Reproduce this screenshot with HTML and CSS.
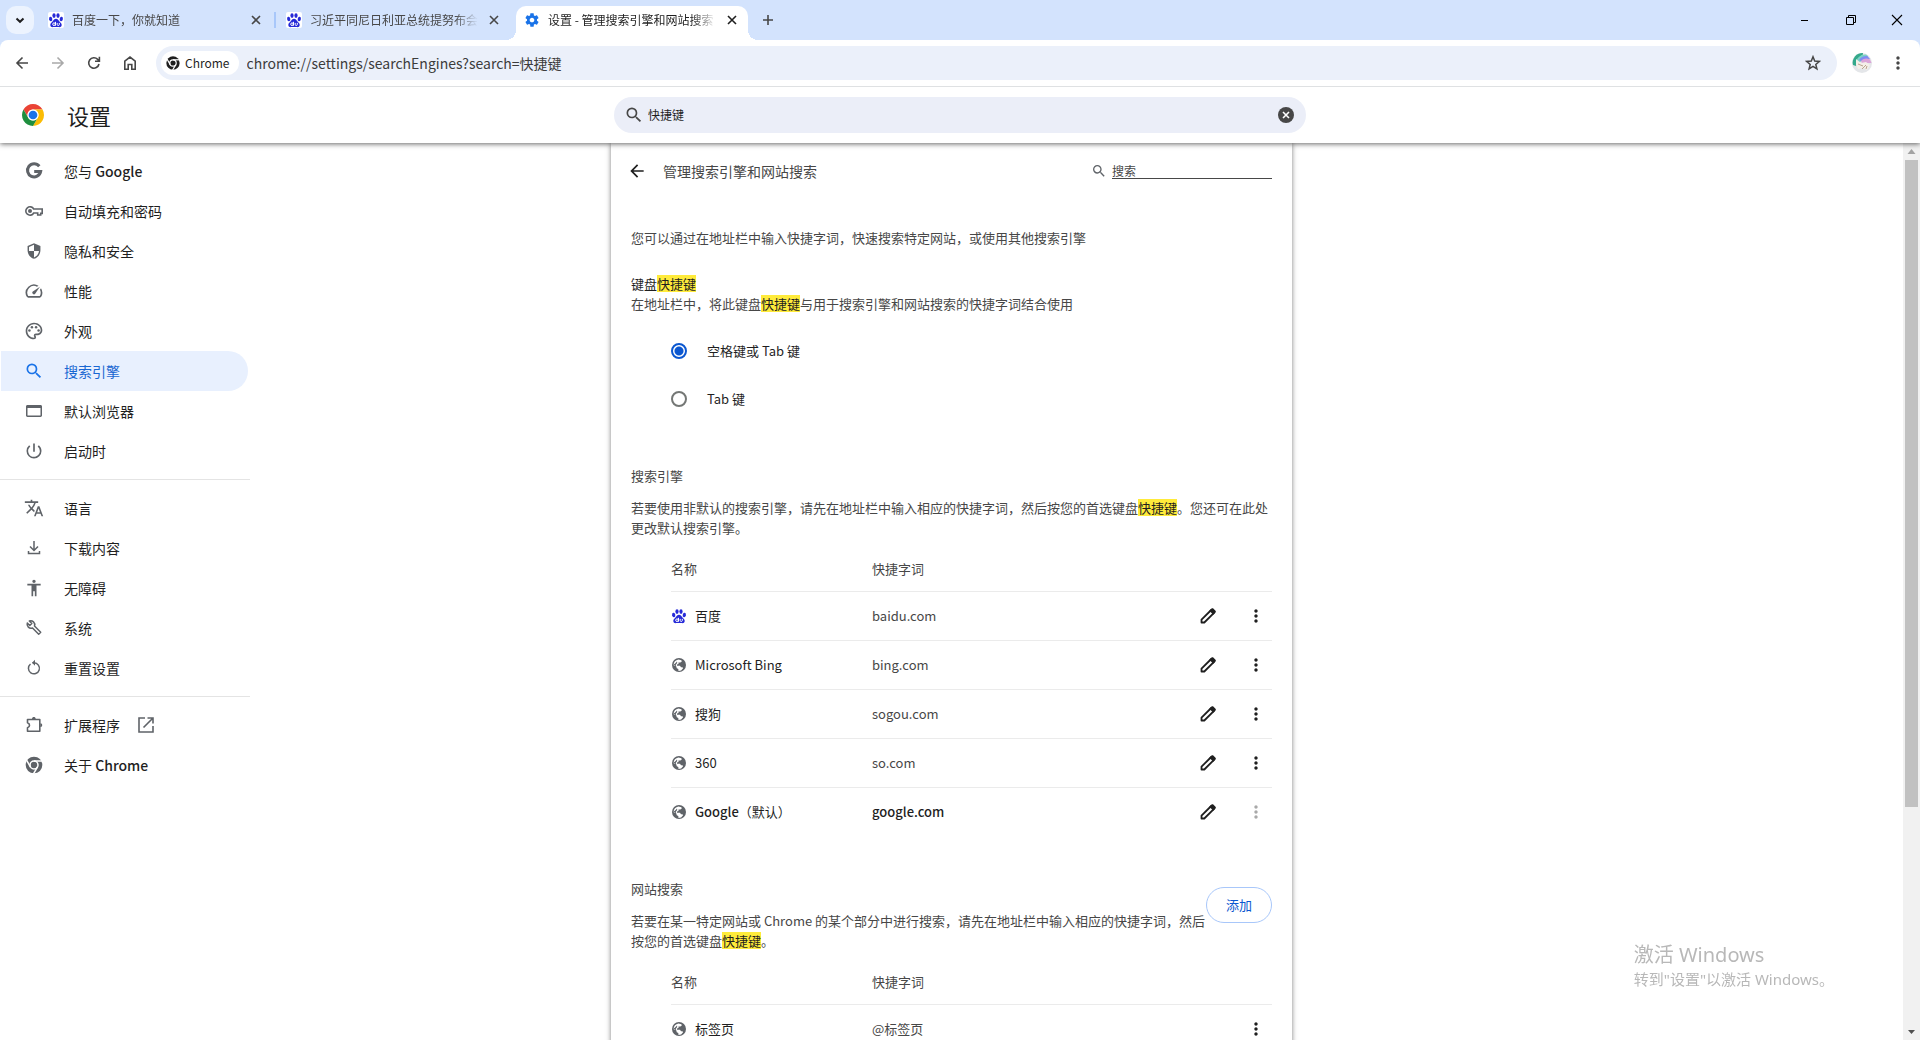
FILE: index.html
```html
<!DOCTYPE html>
<html lang="zh-CN">
<head>
<meta charset="utf-8">
<title>设置 - 管理搜索引擎和网站搜索</title>
<link rel="stylesheet" href="styles.css">
</head>
<body>
<svg class="sprite" aria-hidden="true">
  <symbol id="baidu" viewBox="0 0 16 16">
    <g fill="#2529d8"><ellipse cx="2.7" cy="7" rx="1.6" ry="2.2" transform="rotate(-12 2.7 7)"/><ellipse cx="6" cy="3.6" rx="1.6" ry="2.4"/><ellipse cx="10" cy="3.6" rx="1.6" ry="2.4"/><ellipse cx="13.3" cy="7" rx="1.6" ry="2.2" transform="rotate(12 13.3 7)"/><path d="M8 6.8c1.6 0 2.3 1.3 3.2 2.4 1 1.100 2.600 2 2.500 3.800-.1 1.700-1.400 2.300-2.900 2.100-1.900-.2-3.700-.2-5.600 0-1.500.2-2.800-.4-2.900-2.100-.1-1.800 1.500-2.700 2.500-3.800.9-1.100 1.600-2.400 3.200-2.400z"/></g>
    <g fill="none" stroke="#fff" stroke-width="1"><circle cx="6" cy="12.200" r="1.300"/><path d="M7.500 9.800v3.900M9.200 10.900v1.700c0 1.200 2.100 1.200 2.100 0v-1.700"/></g>
  </symbol>
  <symbol id="globe" viewBox="0 0 16 16"><circle cx="8" cy="8" r="7" fill="#5f6368"/><path d="M2.600 8.200c0-2.900 2-5.200 4.800-5.600l3 .6.4 1.200-1.500 1-1.800.2v1.500l-1.500.5v1.100h3l1 1.500h1.500l.6 1-2 2.200-2.600.5-.2-1.900-1.500-.8-.6-1.900z" fill="#fff"/><path d="M2.600 7.800 4.600 5.900 6 4.600 6.200 6 4.800 7.700 5.200 9.200z" fill="#5f6368"/></symbol>
  <symbol id="search" viewBox="0 0 24 24"><path d="M15.500 14h-.79l-.28-.27A6.470 6.470 0 0 0 16 9.500 6.500 6.500 0 1 0 9.500 16c1.610 0 3.090-.59 4.230-1.570l.27.28v.79l5 4.990L20.490 19l-4.990-5zm-6 0C7.010 14 5 11.990 5 9.500S7.010 5 9.500 5 14 7.010 14 9.500 11.990 14 9.500 14z"/></symbol>
  <symbol id="gear" viewBox="0 0 24 24"><path d="M19.430 12.980c.04-.32.07-.64.07-.98s-.03-.66-.07-.98l2.110-1.650c.19-.15.24-.42.12-.64l-2-3.460c-.12-.22-.39-.3-.61-.22l-2.490 1c-.52-.4-1.080-.73-1.690-.98l-.38-2.650C14.460 2.180 14.250 2 14 2h-4c-.25 0-.46.18-.49.42l-.38 2.650c-.61.25-1.170.59-1.690.98l-2.490-1c-.23-.09-.49 0-.61.22l-2 3.460c-.13.22-.07.49.12.64l2.110 1.650c-.04.32-.07.65-.07.98s.03.66.07.98l-2.110 1.650c-.19.15-.24.42-.12.64l2 3.460c.12.22.39.3.61.22l2.490-1c.52.4 1.080.73 1.690.98l.38 2.650c.03.24.24.42.49.42h4c.25 0 .46-.18.49-.42l.38-2.650c.61-.25 1.170-.59 1.690-.98l2.490 1c.23.09.49 0 .61-.22l2-3.460c.12-.22.07-.49-.12-.64l-2.110-1.650zM12 15.500c-1.930 0-3.500-1.570-3.500-3.500s1.570-3.500 3.500-3.500 3.500 1.570 3.500 3.500-1.570 3.500-3.500 3.500z"/></symbol>
  <symbol id="x" viewBox="0 0 16 16"><path d="m4 4 8 8m0-8-8 8" fill="none" stroke="currentColor" stroke-width="1.600"/></symbol>
  <symbol id="back" viewBox="0 0 24 24"><path d="M20 11H7.830l5.590-5.590L12 4l-8 8 8 8 1.410-1.410L7.830 13H20v-2z"/></symbol>
  <symbol id="more" viewBox="0 0 24 24"><path d="M12 8c1.100 0 2-.9 2-2s-.9-2-2-2-2 .9-2 2 .9 2 2 2zm0 2c-1.100 0-2 .9-2 2s.9 2 2 2 2-.9 2-2-.9-2-2-2zm0 6c-1.100 0-2 .9-2 2s.9 2 2 2 2-.9 2-2-.9-2-2-2z"/></symbol>
  <symbol id="pencil" viewBox="0 0 20 20"><path d="M3.500 16.500v-2.800L13.200 4l2.800 2.800-9.700 9.700z" fill="none" stroke="currentColor" stroke-width="1.800" stroke-linejoin="round"/><path d="m11.300 4.700 2.200-2.200c.5-.5 1.300-.5 1.800 0l2.200 2.200c.5.5.5 1.300 0 1.800l-2.200 2.200z"/></symbol>
  <symbol id="chrome" viewBox="0 0 24 24"><circle cx="12" cy="12" r="10"/><g fill="none" stroke="#fff" stroke-width="1.800"><circle cx="12" cy="12" r="4.800"/><path d="M12 7.200h11"/><path d="M12 7.200h11" transform="rotate(120 12 12)"/><path d="M12 7.200h11" transform="rotate(240 12 12)"/></g></symbol>
  <symbol id="chrome-color" viewBox="0 0 48 48"><path fill="#ea4335" d="M24 12h20.780A24 24 0 0 0 3.220 12l10.390 18A12 12 0 0 1 24 12z"/><path fill="#fbbc04" d="M24 12h20.780A24 24 0 0 0 3.220 12l10.390 18A12 12 0 0 1 24 12z" transform="rotate(120 24 24)"/><path fill="#1e8e3e" d="M24 12h20.780A24 24 0 0 0 3.220 12l10.390 18A12 12 0 0 1 24 12z" transform="rotate(240 24 24)"/><circle cx="24" cy="24" r="12" fill="#fff"/><circle cx="24" cy="24" r="9.500" fill="#1a73e8"/></symbol>
</svg>

<header class="tabstrip">
  <button class="tab-search" aria-label="搜索标签页"><svg class="i16" viewBox="0 0 16 16"><path d="m4.500 6.500 3.500 3.300 3.500-3.300" fill="none" stroke="#1f1f1f" stroke-width="2"/></svg></button>
  <div class="tab"><svg class="i16 favicon"><use href="#baidu"/></svg><span class="tab-title">百度一下，你就知道</span><button class="plain" aria-label="关闭"><svg class="i16"><use href="#x"/></svg></button></div>
  <div class="tab divided"><svg class="i16 favicon"><use href="#baidu"/></svg><span class="tab-title">习近平同尼日利亚总统提努布会谈</span><button class="plain" aria-label="关闭"><svg class="i16"><use href="#x"/></svg></button></div>
  <div class="tab active"><svg class="i16 gear"><use href="#gear"/></svg><span class="tab-title">设置 - 管理搜索引擎和网站搜索</span><button class="plain" aria-label="关闭"><svg class="i16"><use href="#x"/></svg></button></div>
  <button class="plain new-tab" aria-label="新标签页"><svg class="i16" viewBox="0 0 16 16"><path d="M8 3v10M3 8h10" stroke="currentColor" stroke-width="1.600"/></svg></button>
  <div class="window-controls">
    <button class="plain" aria-label="最小化"><svg class="i16" viewBox="0 0 16 16"><path d="M4 8.500h7" stroke="#000"/></svg></button>
    <button class="plain" aria-label="还原"><svg class="i16" viewBox="0 0 16 16"><path d="M3.500 5.500h7v7h-7zM5.500 5v-1.500h7v7H11" fill="none" stroke="#000"/></svg></button>
    <button class="plain" aria-label="关闭窗口"><svg class="i16" viewBox="0 0 16 16"><path d="m3 3 10 10m0-10L3 13" stroke="#000" stroke-width="1.100"/></svg></button>
  </div>
</header>

<nav class="toolbar" aria-label="浏览器工具栏">
  <button class="plain nav-btn" aria-label="后退"><svg class="i16" viewBox="0 0 16 16"><path d="M14 8H3m5.500-5.500L3 8l5.500 5.500" fill="none" stroke="#474747" stroke-width="1.600"/></svg></button>
  <button class="plain nav-btn" aria-label="前进" disabled><svg class="i16" viewBox="0 0 16 16"><path d="M2 8h11M7.500 2.500 13 8l-5.500 5.500" fill="none" stroke="#a9a9a9" stroke-width="1.600"/></svg></button>
  <button class="plain nav-btn" aria-label="重新加载"><svg class="i16" viewBox="0 0 16 16"><path d="M13 9a5.200 5.200 0 1 1-1.300-4.600L13.400 6M13.400 1.800V6.200H9" fill="none" stroke="#474747" stroke-width="1.600"/></svg></button>
  <button class="plain nav-btn" aria-label="主页"><svg class="i16" viewBox="0 0 16 16"><path d="M2.800 6.200 8 2.100l5.200 4.100v8.100H9.800V9.500H6.200v4.800H2.800z" fill="none" stroke="#474747" stroke-width="1.600"/></svg></button>
  <div class="omnibox">
    <span class="chip"><svg class="i16"><use href="#chrome"/></svg>Chrome</span>
    <input class="url" type="text" aria-label="地址和搜索栏" value="chrome://settings/searchEngines?search=快捷键">
    <button class="plain" aria-label="为此标签页添加书签"><svg class="i16" viewBox="0 0 16 16"><path d="m8 1.800 1.700 4.300 4.600.3-3.500 3 1.100 4.500L8 11.400l-3.900 2.500 1.100-4.500-3.500-3 4.600-.3z" fill="none" stroke="#474747" stroke-width="1.500"/></svg></button>
  </div>
  <button class="plain avatar" aria-label="个人资料"><svg viewBox="0 0 20 20"><circle cx="10" cy="10" r="10" fill="#e4e6e9"/><path d="M1 12A9.500 9.500 0 0 1 11 .1L10 6l-6 7z" fill="#34a98b"/><path d="M4 11A9 9 0 0 1 14 1.500l2 1.500-8 6z" fill="#7bd3c4"/><path d="M7 7c2-3 5-4.500 8.500-4L18 6l-9 2z" fill="#7f8df2"/><path d="M9 8c3-3 6-3 9-1.500L19.500 10 10 10z" fill="#dba4d8"/><path d="m4 6 5 4 5-1 4 3-3 5-4-2-5 1-2-4z" fill="#f4efe8"/><path d="m6 11 5 2m-1 3 4-4m1 1-1 3" stroke="#b9a38e" fill="none"/></svg></button>
  <button class="plain" aria-label="菜单"><svg class="i20 muted"><use href="#more"/></svg></button>
</nav>

<header class="settings-header">
  <div class="brand"><svg class="logo"><use href="#chrome-color"/></svg><h1>设置</h1></div>
  <div class="settings-search">
    <svg class="i20"><use href="#search"/></svg>
    <input type="text" aria-label="在设置中搜索" value="快捷键">
    <button class="plain" aria-label="清除搜索"><svg class="i16" viewBox="0 0 16 16"><circle cx="8" cy="8" r="8" fill="#474747"/><path d="m5 5 6 6m0-6-6 6" stroke="#fff" stroke-width="1.600"/></svg></button>
  </div>
</header>

<div class="workspace">
  <nav class="sidebar" aria-label="设置">
    <ul>
      <li><a href="#people"><svg viewBox="0 0 20 20"><path d="M15.300 5.200A6.600 6.600 0 1 0 16.600 10.600h-6.400" fill="none" stroke="currentColor" stroke-width="3"/></svg><span>您与 <b>Google</b></span></a></li>
      <li><a href="#autofill"><svg viewBox="0 0 20 20"><g fill="none" stroke="currentColor" stroke-width="1.600"><path d="M9.700 8h8.500v4.400h-1.500V14h-3v-2H9.700A4.200 4.200 0 1 1 9.700 8z"/></g><circle cx="6" cy="10" r="2"/></svg><span>自动填充和密码</span></a></li>
      <li><a href="#privacy"><svg viewBox="0 0 28 28"><path transform="translate(2 2)" d="M12 1 3 5v6c0 5.550 3.840 10.740 9 12 5.160-1.260 9-6.450 9-12V5l-9-4zm0 10.990h7c-.53 4.120-3.280 7.790-7 8.940V12H5V6.300l7-3.110v8.800z"/></svg><span>隐私和安全</span></a></li>
      <li><a href="#performance"><svg viewBox="0 0 24 24"><path d="m20.380 8.570-1.230 1.850a8 8 0 0 1-.22 7.580H5.070A8 8 0 0 1 15.580 6.850l1.850-1.230A10 10 0 0 0 3.350 19a2 2 0 0 0 1.720 1h13.850a2 2 0 0 0 1.740-1 10 10 0 0 0-.27-10.440zm-9.790 6.840a2 2 0 0 0 2.830 0l5.660-8.490-8.490 5.660a2 2 0 0 0 0 2.830z"/></svg><span>性能</span></a></li>
      <li><a href="#appearance"><svg viewBox="0 0 24 24"><path d="M12 22C6.490 22 2 17.510 2 12S6.490 2 12 2s10 4.040 10 9c0 3.310-2.690 6-6 6h-1.770c-.28 0-.5.22-.5.5 0 .12.050.23.130.33.410.470.640 1.060.640 1.670A2.500 2.500 0 0 1 12 22zm0-18c-4.410 0-8 3.590-8 8s3.590 8 8 8c.28 0 .5-.22.5-.5a.54.54 0 0 0-.14-.35c-.41-.46-.63-1.050-.63-1.650a2.500 2.500 0 0 1 2.500-2.500H16c2.210 0 4-1.790 4-4 0-3.860-3.590-7-8-7z"/><circle cx="6.500" cy="11.500" r="1.500"/><circle cx="9.500" cy="7.500" r="1.500"/><circle cx="14.500" cy="7.500" r="1.500"/><circle cx="17.500" cy="11.500" r="1.500"/></svg><span>外观</span></a></li>
      <li><a class="current" href="#search-engines"><svg><use href="#search"/></svg><span>搜索引擎</span></a></li>
      <li><a href="#default-browser"><svg viewBox="0 0 20 20"><path d="M3.500 4h13c.8 0 1.500.6 1.500 1.400v9.200c0 .8-.7 1.400-1.500 1.400h-13c-.8 0-1.500-.6-1.500-1.400V5.400C2 4.600 2.700 4 3.500 4zm0 3v7.500h13V7z"/></svg><span>默认浏览器</span></a></li>
      <li><a href="#startup"><svg viewBox="0 0 24 24"><path d="M13 3h-2v10h2V3zm4.830 2.170-1.420 1.420A6.920 6.920 0 0 1 19 12c0 3.870-3.130 7-7 7A6.995 6.995 0 0 1 7.580 6.580L6.170 5.170A8.932 8.932 0 0 0 3 12a9 9 0 0 0 18 0c0-2.740-1.230-5.180-3.170-6.830z"/></svg><span>启动时</span></a></li>
    </ul>
    <ul>
      <li><a href="#languages"><svg viewBox="0 0 24 24"><path d="m12.870 15.070-2.540-2.510.03-.03A17.520 17.520 0 0 0 14.070 6H17V4h-7V2H8v2H1v1.990h11.170C11.500 7.920 10.440 9.750 9 11.350 8.070 10.320 7.300 9.190 6.690 8h-2c.73 1.630 1.730 3.170 2.980 4.560l-5.090 5.020L4 19l5-5 3.110 3.110.76-2.040zM18.500 10h-2L12 22h2l1.120-3h4.750L21 22h2l-4.500-12zm-2.620 7 1.620-4.330L19.120 17h-3.240z"/></svg><span>语言</span></a></li>
      <li><a href="#downloads"><svg viewBox="0 0 20 20"><path d="M10 3v9m-4-3.500 4 4 4-4M4.500 13v2.500h11v-2.500" fill="none" stroke="currentColor" stroke-width="1.500"/></svg><span>下载内容</span></a></li>
      <li><a href="#a11y"><svg viewBox="0 0 24 24"><path d="M12 2c1.100 0 2 .9 2 2s-.9 2-2 2-2-.9-2-2 .9-2 2-2zm8 7h-5v13h-2v-6h-2v6H9V9H4V7h16v2z"/></svg><span>无障碍</span></a></li>
      <li><a href="#system"><svg viewBox="0 0 20 20"><path d="m10.500 8 6.200 6.200-2 2-6.200-6.200a4 4 0 0 1-5.200-5l2.500 2.500 2-2L5.300 3a4 4 0 0 1 5.200 5z" fill="none" stroke="currentColor" stroke-width="1.500" stroke-linejoin="round"/></svg><span>系统</span></a></li>
      <li><a href="#reset"><svg viewBox="0 0 20 20"><path d="M6.500 6A5.500 5.500 0 1 0 10 4.800H8.500" fill="none" stroke="currentColor" stroke-width="1.500"/><path d="M11 1.800v6L8 4.800z"/></svg><span>重置设置</span></a></li>
    </ul>
    <ul>
      <li><a href="#extensions"><svg viewBox="0 0 20 20"><path d="M3.500 4.500h12.300v11.800H3.500v-3.600c2.700-.8 2.700-4.200 0-5z" fill="none" stroke="currentColor" stroke-width="1.600" stroke-linejoin="round"/><path d="M8 4c0-2.600 3.700-2.600 3.700 0zM16.300 8.300c2.600 0 2.600 3.800 0 3.800z"/></svg><span>扩展程序</span><svg class="external" viewBox="0 0 20 20"><path d="M9 3H3v14h14v-6M11.500 3H17v5.500M17 3 7.500 12.500" fill="none" stroke="currentColor" stroke-width="1.600"/></svg></a></li>
      <li><a href="#about"><svg><use href="#chrome"/></svg><span>关于 <b>Chrome</b></span></a></li>
    </ul>
  </nav>

  <main class="card">
    <div class="subheader">
      <button class="plain" aria-label="返回"><svg class="i20"><use href="#back"/></svg></button>
      <h2>管理搜索引擎和网站搜索</h2>
      <label class="find"><svg class="i16"><use href="#search"/></svg><input type="search" placeholder="搜索" aria-label="搜索"></label>
    </div>
    <p class="intro">您可以通过在地址栏中输入快捷字词，快速搜索特定网站，或使用其他搜索引擎</p>
    <section class="shortcut">
      <h3 class="strong">键盘<mark>快捷键</mark></h3>
      <p>在地址栏中，将此键盘<mark>快捷键</mark>与用于搜索引擎和网站搜索的快捷字词结合使用</p>
      <div class="radios">
        <label><input type="radio" name="shortcut" checked>空格键或 Tab 键</label>
        <label><input type="radio" name="shortcut">Tab 键</label>
      </div>
    </section>
    <section class="engines">
      <div class="section-head"><div>
        <h3>搜索引擎</h3>
        <p>若要使用非默认的搜索引擎，请先在地址栏中输入相应的快捷字词，然后按您的首选键盘<mark>快捷键</mark>。您还可在此处更改默认搜索引擎。</p>
      </div></div>
      <table>
        <thead><tr><th class="name">名称</th><th>快捷字词</th><th class="actions"></th></tr></thead>
        <tbody>
          <tr><td><span class="engine"><svg class="i16"><use href="#baidu"/></svg>百度</span></td><td>baidu.com</td><td><span class="tools"><button class="plain" aria-label="修改"><svg class="i20"><use href="#pencil"/></svg></button><button class="plain" aria-label="更多操作"><svg class="i20"><use href="#more"/></svg></button></span></td></tr>
          <tr><td><span class="engine"><svg class="i16"><use href="#globe"/></svg>Microsoft Bing</span></td><td>bing.com</td><td><span class="tools"><button class="plain" aria-label="修改"><svg class="i20"><use href="#pencil"/></svg></button><button class="plain" aria-label="更多操作"><svg class="i20"><use href="#more"/></svg></button></span></td></tr>
          <tr><td><span class="engine"><svg class="i16"><use href="#globe"/></svg>搜狗</span></td><td>sogou.com</td><td><span class="tools"><button class="plain" aria-label="修改"><svg class="i20"><use href="#pencil"/></svg></button><button class="plain" aria-label="更多操作"><svg class="i20"><use href="#more"/></svg></button></span></td></tr>
          <tr><td><span class="engine"><svg class="i16"><use href="#globe"/></svg>360</span></td><td>so.com</td><td><span class="tools"><button class="plain" aria-label="修改"><svg class="i20"><use href="#pencil"/></svg></button><button class="plain" aria-label="更多操作"><svg class="i20"><use href="#more"/></svg></button></span></td></tr>
          <tr><td><span class="engine"><svg class="i16"><use href="#globe"/></svg><span><b>Google</b>（默认）</span></span></td><td><b>google.com</b></td><td><span class="tools"><button class="plain" aria-label="修改"><svg class="i20"><use href="#pencil"/></svg></button><button class="plain" aria-label="更多操作" disabled><svg class="i20"><use href="#more"/></svg></button></span></td></tr>
        </tbody>
      </table>
    </section>
    <section class="sites">
      <div class="section-head"><div>
        <h3>网站搜索</h3>
        <p>若要在某一特定网站或 Chrome 的某个部分中进行搜索，请先在地址栏中输入相应的快捷字词，然后按您的首选键盘<mark>快捷键</mark>。</p>
      </div><button class="add">添加</button></div>
      <table>
        <thead><tr><th class="name">名称</th><th>快捷字词</th><th class="actions"></th></tr></thead>
        <tbody>
          <tr><td><span class="engine"><svg class="i16"><use href="#globe"/></svg>标签页</span></td><td>@标签页</td><td><span class="tools"><button class="plain" aria-label="更多操作"><svg class="i20"><use href="#more"/></svg></button></span></td></tr>
        </tbody>
      </table>
    </section>
  </main>

  <div class="scrollbar" aria-hidden="true">
    <svg viewBox="0 0 17 17"><path d="M4.500 11h8l-4-5z" fill="#a3a3a3"/></svg>
    <div class="track"><div class="thumb"></div></div>
    <svg viewBox="0 0 17 17"><path d="M5 7h7l-3.500 4z" fill="#505050"/></svg>
  </div>
</div>

<aside class="watermark"><p class="watermark-title">激活 Windows</p><p>转到"设置"以激活 Windows。</p></aside>
</body>
</html>
```
FILE: styles.css
```css
* { box-sizing: border-box; }

body {
  margin: 0;
  height: 100vh;
  overflow: hidden;
  display: flex;
  flex-direction: column;
  background: #fff;
  color: #1f1f1f;
  font: 13px/20px "Noto Sans CJK SC", sans-serif;
}

h1, h2, h3, p, ul { margin: 0; padding: 0; font-size: inherit; font-weight: 400; }
ul { list-style: none; }
b { font-weight: 500; }
svg { display: block; flex: none; fill: currentColor; }
input, button { font: inherit; color: inherit; }
input { min-width: 0; padding: 0; border: 0; outline: 0; background: none; }

.sprite { position: absolute; width: 0; height: 0; }
.i16 { width: 16px; height: 16px; }
.i20 { width: 20px; height: 20px; }
.muted { color: #474747; }

.plain {
  display: flex;
  align-items: center;
  justify-content: center;
  padding: 0;
  border: 0;
  background: none;
}

/* Tab strip */
.tabstrip {
  display: flex;
  align-items: center;
  height: 40px;
  flex: none;
  padding-left: 6px;
  background: #d3e3fd;
  color: #474747;
  font-size: 12px;
}
.tab-search {
  display: grid;
  place-items: center;
  width: 28px;
  height: 28px;
  margin-right: 6px;
  padding: 0;
  border: 0;
  border-radius: 10px;
  background: #ecf3fe;
}
.tab {
  position: relative;
  display: flex;
  align-items: center;
  gap: 8px;
  width: 238px;
  height: 28px;
  padding: 0 14px 0 8px;
}
.tab.divided::before {
  content: "";
  position: absolute;
  left: -4px;
  top: 6px;
  width: 2px;
  height: 16px;
  background: #a8c7fa;
}
.tab-title {
  flex: 1;
  overflow: hidden;
  white-space: nowrap;
  -webkit-mask-image: linear-gradient(to right, #000 86%, transparent);
  mask-image: linear-gradient(to right, #000 86%, transparent);
}
.tab.active {
  align-self: flex-end;
  width: 232px;
  height: 34px;
  padding: 0 8px 6px;
  border-radius: 10px 10px 0 0;
  background: #fff;
  color: #1f1f1f;
}
.tab.active::before, .tab.active::after {
  content: "";
  position: absolute;
  bottom: 0;
  width: 10px;
  height: 10px;
}
.tab.active::before { left: -10px; background: radial-gradient(circle at 0 0, transparent 10px, #fff 10px); }
.tab.active::after { right: -10px; background: radial-gradient(circle at 100% 0, transparent 10px, #fff 10px); }
.favicon { border-radius: 2px; background: #fff; }
.gear { color: #1a73e8; }
.new-tab { width: 28px; height: 28px; margin-left: 6px; }
.window-controls { display: flex; margin-left: auto; }
.window-controls .plain { width: 46px; height: 40px; }

/* Toolbar */
.toolbar {
  display: flex;
  align-items: center;
  height: 47px;
  flex: none;
  padding: 0 12px 0 4px;
  border-bottom: 1px solid #dfe1e3;
  border-radius: 8px 8px 0 0;
  background: #fff;
}
.tabstrip { margin-bottom: -8px; height: 48px; padding-bottom: 8px; }
.toolbar { position: relative; }
.nav-btn { width: 36px; height: 36px; }
.omnibox {
  display: flex;
  align-items: center;
  flex: 1;
  height: 34px;
  margin: 0 15px 0 8px;
  padding: 0 16px 0 5px;
  border-radius: 17px;
  background: #ebf0fa;
}
.chip {
  display: flex;
  align-items: center;
  gap: 4px;
  height: 24px;
  padding: 0 9px 0 4px;
  border-radius: 12px;
  background: #fff;
  font-size: 12px;
}
.url { flex: 1; margin-left: 8px; font-size: 14px; color: #3c3c3c; }
.avatar { width: 20px; height: 20px; margin-right: 16px; }
.avatar svg { width: 20px; height: 20px; }

/* Settings header */
.settings-header {
  position: relative;
  z-index: 1;
  display: grid;
  grid-template-columns: 1fr minmax(0, 692px) 1fr;
  align-items: center;
  height: 56px;
  flex: none;
  background: #fff;
  box-shadow: 0 1px 5px rgba(0, 0, 0, .6);
  clip-path: inset(0 0 -8px 0);
}
.brand { display: flex; align-items: center; gap: 23px; padding-left: 22px; }
.logo { width: 22px; height: 22px; }
.brand h1 { font-size: 22px; line-height: 32px; }
.settings-search {
  display: flex;
  align-items: center;
  gap: 4px;
  height: 36px;
  padding: 0 12px 0 10px;
  border-radius: 18px;
  background: #ebeef8;
}
.settings-search > svg { color: #474747; }
.settings-search input { flex: 1; font-size: 12px; }

/* Main area */
.workspace {
  display: grid;
  grid-template-columns: 1fr minmax(0, 681px) 1fr 17px;
  grid-template-rows: minmax(0, 1fr);
  flex: 1;
  min-height: 0;
  overflow: hidden;
}
.sidebar { width: 250px; padding-top: 8px; font-size: 14px; }
.sidebar ul + ul { margin-top: 8px; padding-top: 8px; border-top: 1px solid #e4e4e4; }
.sidebar a {
  display: flex;
  align-items: center;
  gap: 20px;
  height: 40px;
  margin: 0 2px 0 1px;
  padding-left: 23px;
  border-radius: 0 20px 20px 0;
  color: #1f1f1f;
  text-decoration: none;
}
.sidebar svg { width: 20px; height: 20px; color: #5f6368; }
.sidebar svg.external { margin-left: -4px; }
.sidebar a.current { background: #e8f0fe; color: #1967d2; }
.sidebar a.current svg { color: #1a73e8; }

.card {
  height: max-content;
  padding: 0 20px 40px;
  background: #fff;
  color: #474747;
  box-shadow: 0 0 5px rgba(0, 0, 0, .5);
}
.subheader { display: flex; align-items: center; height: 56px; }
.subheader > .plain { width: 12px; margin-right: 20px; }
.subheader > .plain svg { color: #1f1f1f; }
.subheader h2 { flex: 1; font-size: 14px; }
.find { display: flex; align-items: center; gap: 5px; color: #5f6368; }
.find input { width: 160px; height: 16px; border-bottom: 1px solid #474747; font-size: 12px; line-height: 15px; }
.find input::placeholder { color: #474747; opacity: 1; }

.intro { padding-top: 29px; }
.shortcut { padding-top: 26px; }
.strong { color: #1f1f1f; }
mark { display: inline-block; line-height: 17px; background: #ffeb3b; color: #1f1f1f; }
.radios { padding: 13px 40px 0; color: #1f1f1f; }
.radios label { display: flex; align-items: center; gap: 20px; height: 48px; }
.radios input {
  appearance: none;
  width: 16px;
  height: 16px;
  margin: 0;
  border: 2px solid #747775;
  border-radius: 50%;
}
.radios input:checked { border-color: #0b57d0; background: radial-gradient(circle, #0b57d0 4px, transparent 5px); }

.engines, .sites { padding-top: 43px; }
.section-head { display: flex; align-items: center; }
.section-head > div { flex: 1; }
.section-head p { margin: 12px -4px 0 0; }
.add {
  width: 66px;
  height: 36px;
  margin-bottom: 20px;
  padding: 0;
  border: 1px solid #a8c7fa;
  border-radius: 18px;
  background: #fff;
  color: #0b57d0;
}
table { width: calc(100% - 40px); margin: 8px 0 0 40px; border-collapse: collapse; table-layout: fixed; }
th, td { height: 49px; padding: 0; text-align: left; font-weight: 400; }
thead th { height: 45px; padding-top: 2px; }
.name { width: 201px; }
.actions { width: 96px; }
tbody tr { border-top: 1px solid #ebebeb; }
.engine { display: flex; align-items: center; gap: 8px; color: #1f1f1f; }
td b { color: #1f1f1f; }
.tools { display: flex; justify-content: flex-end; gap: 16px; color: #1f1f1f; }
.tools .plain { width: 32px; height: 32px; }
.tools .plain:disabled { opacity: .38; }

.scrollbar { grid-column: 4; display: flex; flex-direction: column; background: #f1f1f1; }
.scrollbar svg { width: 17px; height: 17px; }
.track { flex: 1; padding: 0 2px; }
.thumb { height: 75%; background: #c1c1c1; }

.watermark {
  position: fixed;
  right: 86px;
  bottom: 51px;
  z-index: 2;
  color: #b8b8b8;
  font: 15px/20px "Noto Sans", "Noto Sans CJK SC", sans-serif;
}
.watermark-title { font-size: 20px; line-height: 28px; }
```
